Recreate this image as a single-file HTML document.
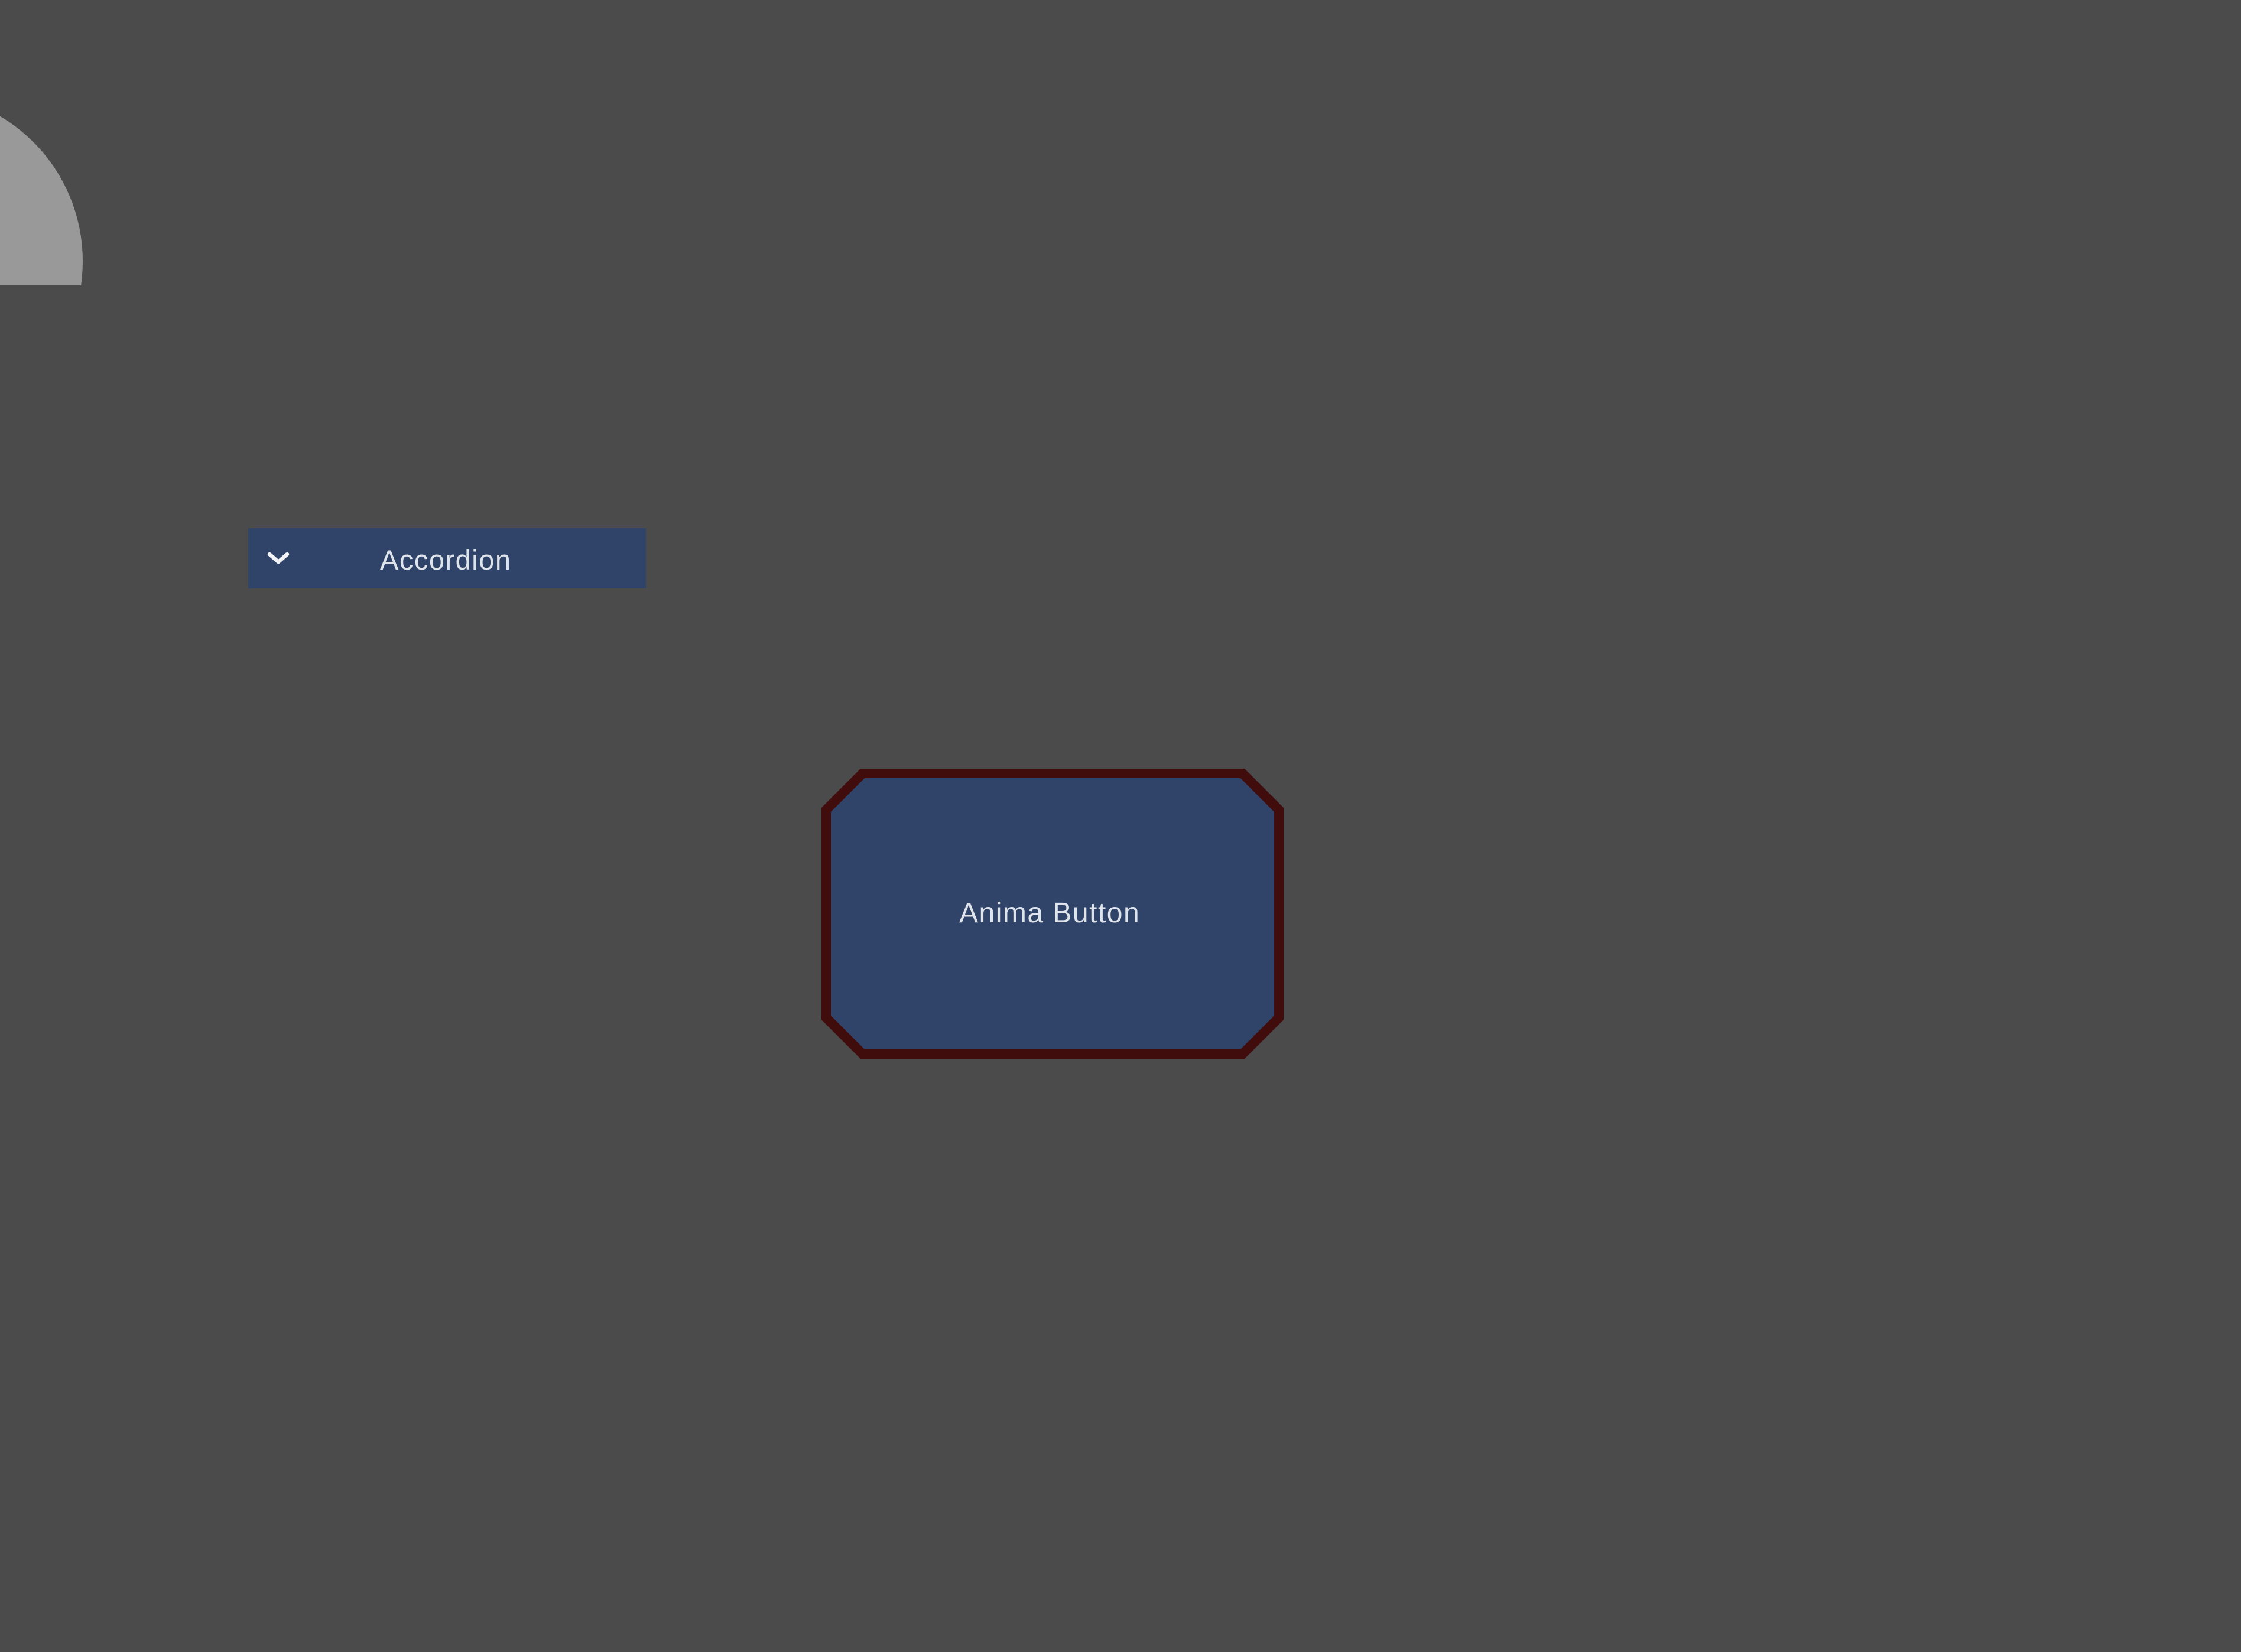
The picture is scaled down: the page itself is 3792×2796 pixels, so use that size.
<!DOCTYPE html>
<html><head><meta charset="utf-8"><style>
html,body{margin:0;padding:0;}
body{width:3792px;height:2796px;background:#4b4b4b;position:relative;overflow:hidden;font-family:"Liberation Sans",sans-serif;}
.t{position:absolute;line-height:1;color:#dfe4ec;white-space:nowrap;}
</style></head><body>
<svg width="3792" height="2796" style="position:absolute;left:0;top:0">
  <defs><clipPath id="c"><rect x="0" y="0" width="400" height="483"/></clipPath></defs>
  <circle cx="-145" cy="442" r="285" fill="#999999" clip-path="url(#c)"/>
  <rect x="420" y="894" width="673" height="102" fill="#2f4468"/>
  <path d="M456 938 L471 951 L486 938" fill="none" stroke="#f2f4f8" stroke-width="6.5" stroke-linecap="round" stroke-linejoin="round"/>
  <polygon points="1456,1301 2106,1301 2172,1367 2172,1726 2106,1792 1456,1792 1390,1726 1390,1367" fill="#400c0c"/>
  <polygon points="1463,1317 2099,1317 2156,1374 2156,1719 2099,1776 1463,1776 1406,1719 1406,1374" fill="#2f4468"/>
</svg>
<div class="t" style="left:643px;top:924px;font-size:47px;letter-spacing:1.5px;">Accordion</div>
<div class="t" style="left:1623px;top:1522px;font-size:48px;letter-spacing:1.5px;">Anima Button</div>
</body></html>
